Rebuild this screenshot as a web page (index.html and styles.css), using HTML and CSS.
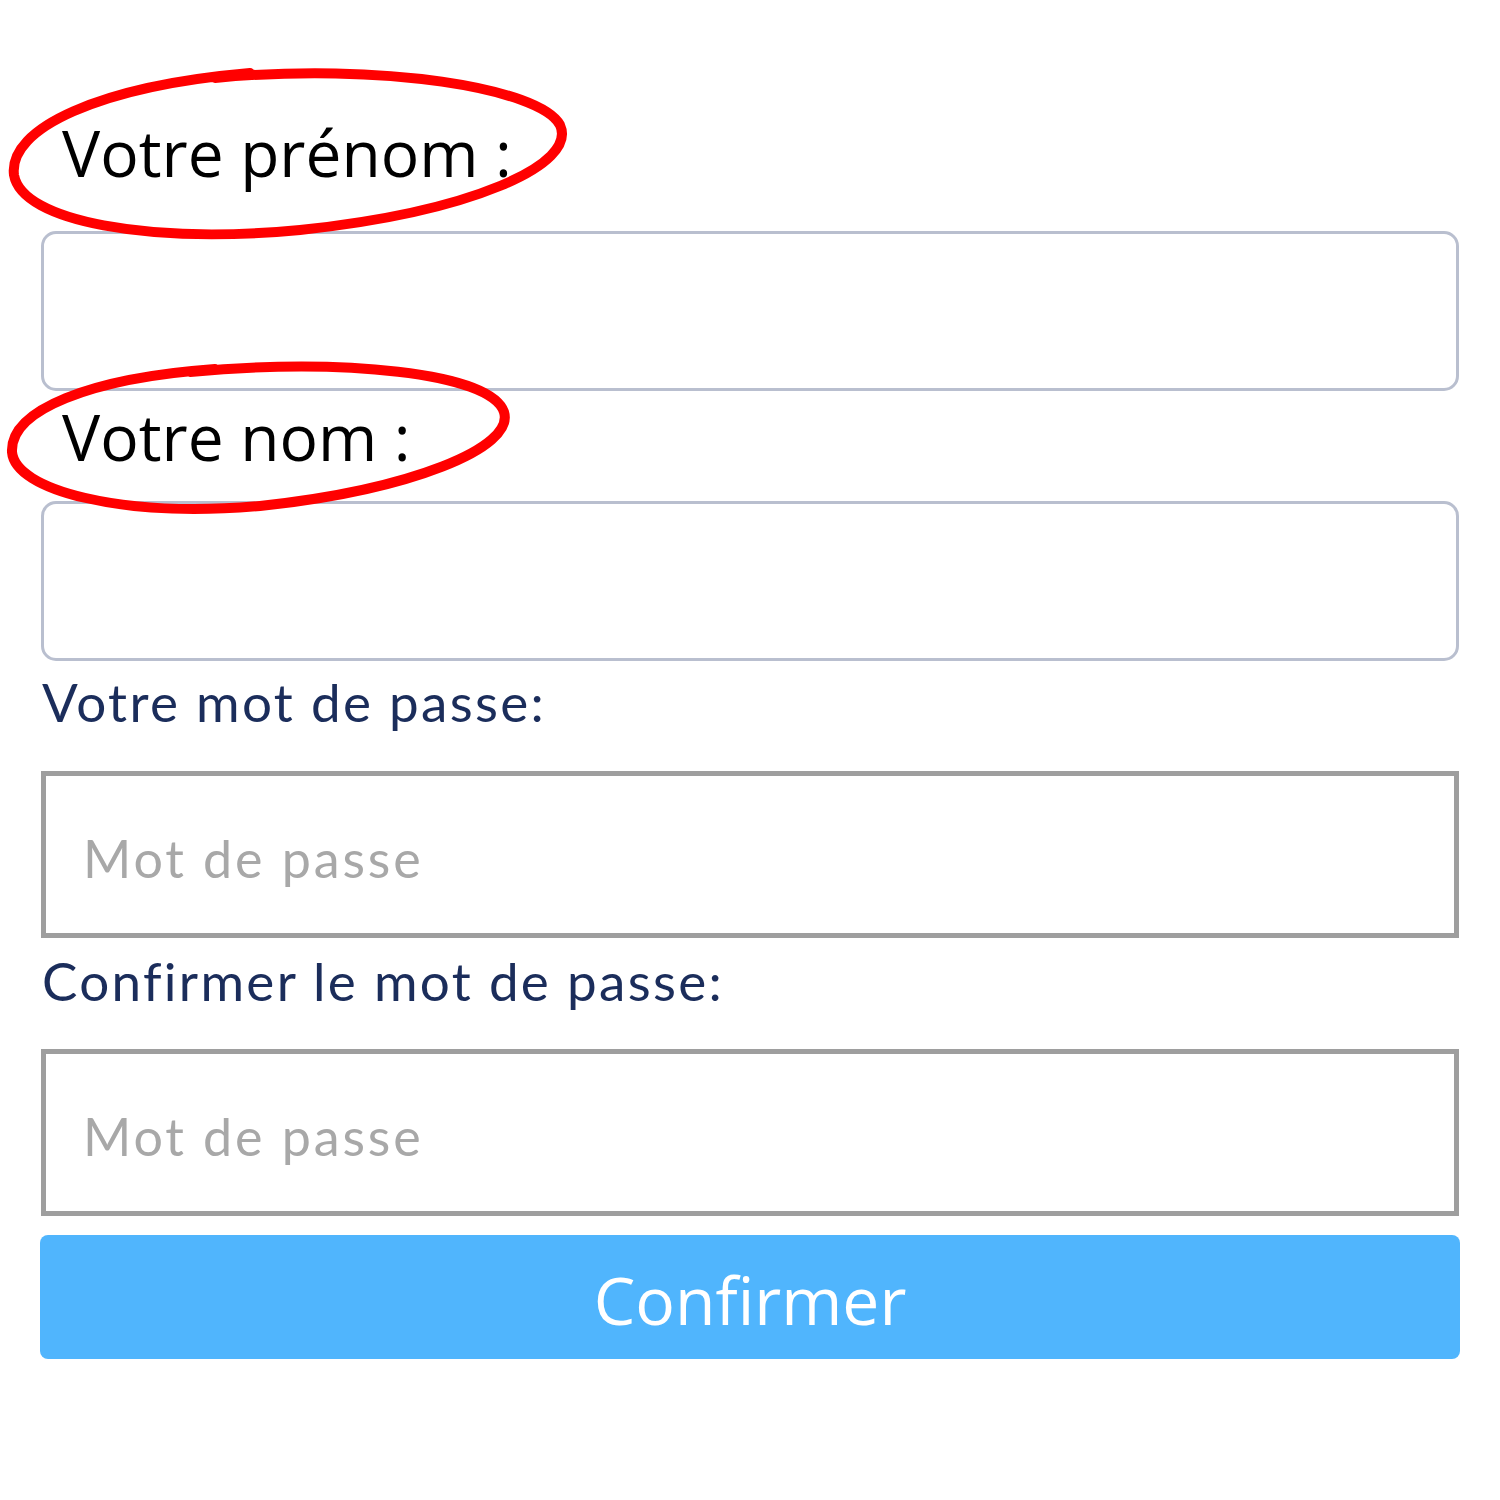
FILE: index.html
```html
<!DOCTYPE html>
<html lang="fr">
<head>
<meta charset="utf-8">
<title>Inscription</title>
<link rel="stylesheet" href="styles.css">
</head>
<body>
<div class="page">
  <form class="form">
    <label class="lbl-ann lbl-first">Votre prénom :</label>
    <div class="field-soft"></div>
    <label class="lbl-ann lbl-second">Votre nom :</label>
    <div class="field-soft"></div>
    <label class="lbl-app lbl-pass">Votre mot de passe:</label>
    <div class="field-hard"><span class="ph">Mot de passe</span></div>
    <label class="lbl-app lbl-conf">Confirmer le mot de passe:</label>
    <div class="field-hard"><span class="ph">Mot de passe</span></div>
    <div class="btn">Confirmer</div>
  </form>
  <svg class="marks" width="1500" height="560" viewBox="0 0 1500 560" aria-hidden="true">
    <path d="M 215 78 C 380 62, 540 88, 560 125 C 578 165, 470 212, 300 230 C 150 244, 22 222, 14 175 C 8 128, 100 86, 250 73"
          fill="none" stroke="#ff0000" stroke-width="10" stroke-linecap="round"/>
    <path d="M 190 372 C 340 358, 490 372, 504 412 C 515 448, 410 490, 260 506 C 120 518, 15 490, 12 452 C 10 410, 90 378, 215 369"
          fill="none" stroke="#ff0000" stroke-width="10" stroke-linecap="round"/>
  </svg>
</div>
</body>
</html>
```
FILE: styles.css
```css
html, body {
  margin: 0;
  padding: 0;
  background: #ffffff;
}

.page {
  position: relative;
  width: 1500px;
  height: 1500px;
}

.form {
  display: flex;
  flex-direction: column;
  padding: 121px 41px 0 41px;
}

.lbl-ann {
  display: block;
  font-family: "Open Sans", sans-serif;
  font-size: 64px;
  line-height: 64px;
  height: 64px;
  color: #000000;
  padding-left: 21px;
  white-space: nowrap;
}

.lbl-first { margin-bottom: 46px; }
.lbl-second { margin-top: 14px; margin-bottom: 32px; }

.field-soft {
  box-sizing: border-box;
  height: 160px;
  border: 3px solid #b9bfcf;
  border-radius: 15px;
  background: #ffffff;
}

.lbl-app {
  display: block;
  font-family: "Lato", sans-serif;
  font-size: 53px;
  line-height: 52px;
  height: 52px;
  letter-spacing: 2.3px;
  color: #1b2d5b;
  padding-left: 1px;
  white-space: nowrap;
}

.lbl-pass { margin-top: 15px; margin-bottom: 43px; }
.lbl-conf { margin-top: 17px; margin-bottom: 42px; }

.field-hard {
  box-sizing: border-box;
  height: 167px;
  border: 5px solid #9e9e9e;
  background: #ffffff;
  display: flex;
  align-items: center;
  padding: 6px 0 0 37px;
}

.ph {
  font-family: "Lato", sans-serif;
  font-size: 52px;
  letter-spacing: 2.9px;
  color: #a8a8a8;
}

.btn {
  margin-top: 19px;
  height: 124px;
  margin-left: -1px;
  margin-right: -1px;
  border-radius: 8px;
  background: #50b5fd;
  color: #ffffff;
  font-family: "Open Sans", sans-serif;
  font-size: 66px;
  display: flex;
  align-items: center;
  justify-content: center;
  padding-top: 4px;
  box-sizing: border-box;
}

.marks {
  position: absolute;
  left: 0;
  top: 0;
  pointer-events: none;
}
```
